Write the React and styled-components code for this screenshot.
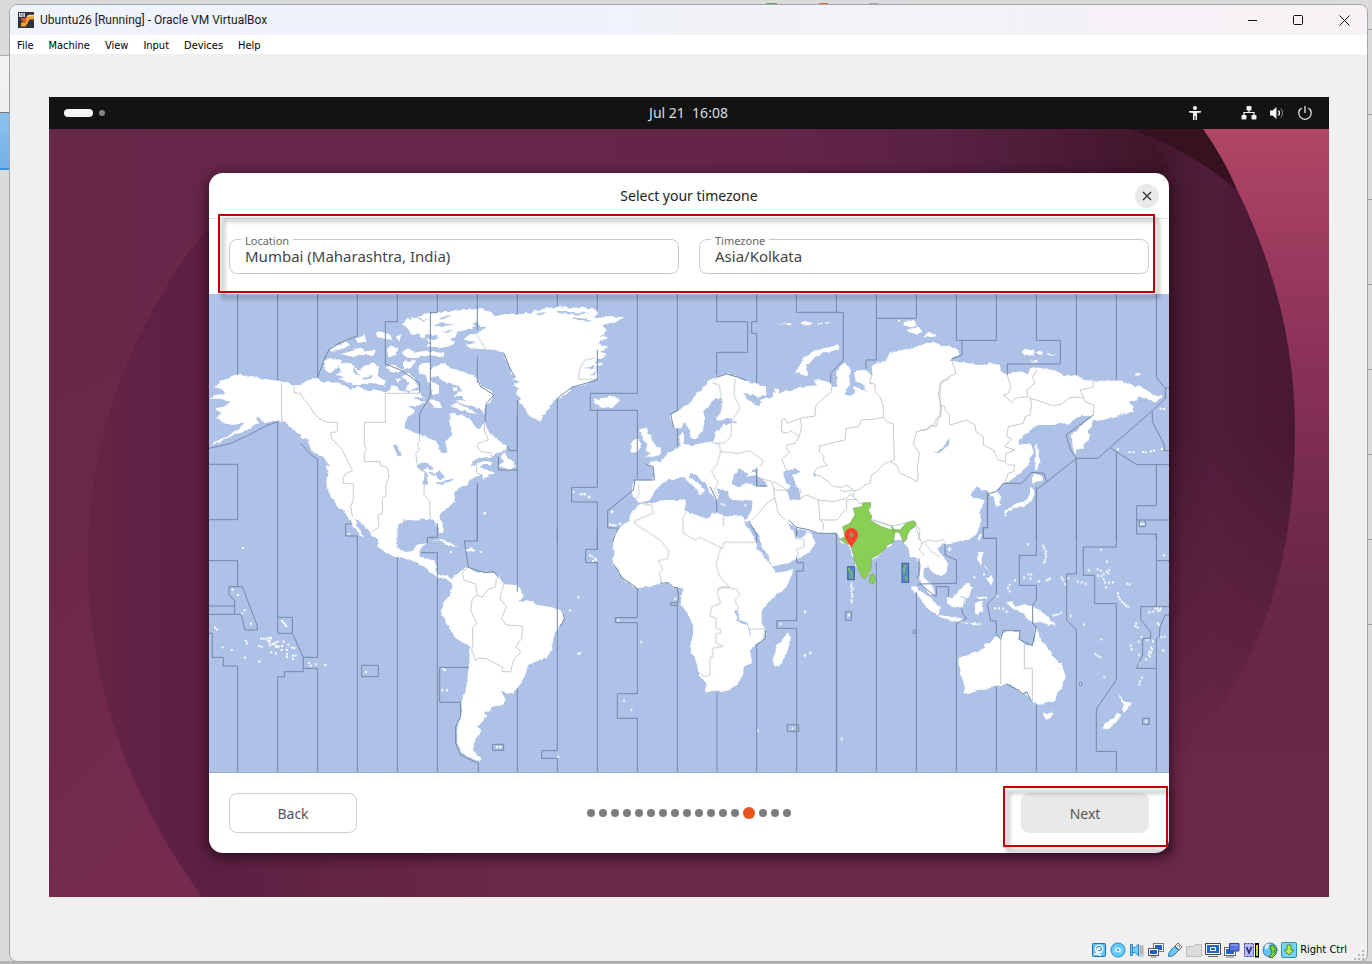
import React from "react"
import styled, { createGlobalStyle } from "styled-components"

const GlobalStyle = createGlobalStyle`
  * {
    box-sizing: border-box;
  }
  body {
    margin: 0;
    font-family: "DejaVu Sans Condensed", "DejaVu Sans", sans-serif;
    color: #000;
  }
  button, input {
    font: inherit;
    color: inherit;
  }
`

const titleFont = `Roboto, "Open Sans", sans-serif`
const guestFont = `"Noto Sans", "Open Sans", sans-serif`

/* ---------- host desktop and window ---------- */

const Desktop = styled.div`
  min-height: 100vh;
  padding: 4px 4px 2px 9px;
  display: flex;
  background:
    linear-gradient(#a9a9a9, #a9a9a9) 0 55px / 10px 1px no-repeat,
    linear-gradient(#f3f3f3, #efefef) 0 56px / 10px 56px no-repeat,
    linear-gradient(#777, #777) 0 112px / 10px 1px no-repeat,
    linear-gradient(#8cc2ee, #74b1e6) 0 113px / 10px 55px no-repeat,
    linear-gradient(#3c8ede, #3c8ede) 0 168px / 10px 2px no-repeat,
    linear-gradient(#5fa85a, #5fa85a) 766px 3px / 11px 2px no-repeat,
    linear-gradient(#d8654a, #d8654a) 819px 3px / 9px 2px no-repeat,
    linear-gradient(#aaa, #aaa) 869px 3px / 9px 2px no-repeat,
    repeating-linear-gradient(transparent 0 29px, #9b9b9b 29px 30px, transparent 30px 85px)
      right 0 / 5px 640px no-repeat,
    linear-gradient(#b4b4b4, #b4b4b4) 0 100% / 100% 3px no-repeat,
    #dbdbdb;
`
const Window = styled.div`
  flex: 1;
  display: flex;
  flex-direction: column;
  background: #f0f0f0;
  border: 1px solid #a3a7ab;
  border-radius: 8px;
  overflow: hidden;
`
const TitleBar = styled.header`
  height: 30px;
  padding-left: 8px;
  display: flex;
  align-items: center;
  gap: 6px;
  background: linear-gradient(90deg, #eef4fa 0%, #f0f3f9 45%, #f8f1f5 100%);
`
const WindowTitle = styled.h1`
  flex: 1;
  margin: 0;
  font: 400 12px ${titleFont};
  color: #1a1a1a;
`
const CaptionButtons = styled.div`
  display: flex;
`
const CaptionButton = styled.button`
  width: 46px;
  height: 28px;
  padding: 0;
  border: 0;
  background: none;
  display: grid;
  place-items: center;
`
const MenuBar = styled.nav`
  height: 19px;
  padding: 1px 0 0 7px;
  display: flex;
  align-items: center;
  gap: 15px;
  background: #fff;
  font-size: 11px;
`
const MenuLink = styled.a`
  color: #000;
  text-decoration: none;
`
const Viewport = styled.main`
  flex: 1;
  padding: 43px 38px 0 39px;
`
const StatusBar = styled.footer`
  height: 22px;
  padding: 0 2px;
  display: flex;
  align-items: center;
  justify-content: flex-end;
  gap: 3px;
  font-size: 11px;
  line-height: 16px;
`
const StatusIcon = styled.svg`
  width: 16px;
  height: 16px;
  display: block;
`
const Grip = styled.svg`
  width: 12px;
  height: 12px;
  margin-left: 3px;
  align-self: flex-end;
`

/* ---------- guest screen ---------- */

const Guest = styled.section`
  font-family: ${guestFont};
`
const TopBar = styled.div`
  height: 32px;
  padding: 0 16px 0 15px;
  display: grid;
  grid-template-columns: 1fr auto 1fr;
  align-items: center;
  background: #131313;
  color: #dedede;
  font-size: 14px;
  line-height: 20px;
`
const Workspaces = styled.div`
  display: flex;
  align-items: center;
  gap: 6px;
`
const Workspace = styled.span`
  width: ${p => (p.$current ? 29 : 6)}px;
  height: ${p => (p.$current ? 8 : 6)}px;
  border-radius: 4px;
  background: ${p => (p.$current ? "#f4f4f4" : "#858585")};
`
const Clock = styled.time`
  white-space: pre;
`
const Tray = styled.div`
  display: flex;
  justify-content: flex-end;
  gap: 12px;
`
const TrayIcon = styled.svg`
  width: 16px;
  height: 16px;
  display: block;

  &:first-child {
    margin-right: 26px;
  }
`
const Stage = styled.div`
  position: relative;
  padding: 44px 0;
  background: #6a2747;
`
const WallpaperArt = styled.svg`
  position: absolute;
  inset: 0;
  width: 100%;
  height: 100%;
`
const Dialog = styled.section`
  position: relative;
  width: 75%;
  margin: 0 auto;
  background: #fff;
  border-radius: 14px;
  box-shadow: 0 3px 12px 2px rgba(20, 0, 15, 0.6);
  color: #444;
`
const DialogHeader = styled.header`
  height: 46px;
  padding: 0 10px;
  display: grid;
  grid-template-columns: 24px 1fr 24px;
  align-items: center;
  border-bottom: 1px solid #e2e2e2;
`
const DialogTitle = styled.h2`
  grid-column: 2;
  margin: 0;
  text-align: center;
  font-size: 14px;
  font-weight: 400;
  color: #222;
`
const CloseButton = styled.button`
  width: 24px;
  height: 24px;
  padding: 0;
  border: 0;
  border-radius: 50%;
  background: #e9e9e9;
  display: grid;
  place-items: center;
`
const Fields = styled.form`
  position: relative;
  padding: 20px;
  display: flex;
  gap: 20px;
`
const Field = styled.div`
  position: relative;
  flex: 1;
`
const FieldLabel = styled.label`
  position: absolute;
  top: -5px;
  left: 12px;
  padding: 0 4px;
  background: #fff;
  font-size: 11px;
  line-height: 14px;
  color: #666;
`
const FieldInput = styled.input`
  width: 100%;
  height: 35px;
  padding: 0 15px 1px;
  display: block;
  border: 1px solid #c9c9c9;
  border-radius: 8px;
  background: #fff;
  font-size: 15px;
`
const Highlight = styled.span`
  position: absolute;
  inset: ${p => p.$inset};
  border: 2px solid #c00000;
  filter: drop-shadow(4px 5px 2px rgba(0, 0, 0, 0.4));
  pointer-events: none;
`
const MapArt = styled.svg`
  width: 100%;
  height: auto;
  display: block;
`
const DialogFooter = styled.footer`
  padding: 20px;
  display: grid;
  grid-template-columns: 128px 1fr 128px;
  align-items: center;
`
const ButtonSlot = styled.div`
  position: relative;
  display: flex;
`
const WizardButton = styled.button`
  flex: 1;
  height: 40px;
  border: 1px solid ${p => (p.$filled ? "#e9e9e9" : "#cdcdcd")};
  border-radius: 8px;
  background: ${p => (p.$filled ? "#e9e9e9" : "#fff")};
  color: #555;
  font-size: 14px;
`
const Steps = styled.div`
  display: flex;
  align-items: center;
  justify-content: center;
  gap: 4px;
`
const Step = styled.span`
  width: ${p => (p.$current ? 12 : 8)}px;
  height: ${p => (p.$current ? 12 : 8)}px;
  border-radius: 50%;
  background: ${p => (p.$current ? "#e95420" : "#7d7d7d")};
`

/* ---------- world map data ----------
   Every region has its own origin on the map and uses units of a third of a pixel. */

const regions = [
  {
    id: "americas",
    x: 209,
    y: 290,
    land: [
      "15,292 45,270 60,262 70,257 92,252 105,258 130,262 160,266 190,270 216,274 250,285 270,286 285,276 300,270 325,264 345,278 360,276 380,280 400,284 425,296 450,290 480,302 500,300 520,304 545,302 550,285 575,303 600,305 632,300 640,318 650,322 625,325 612,322 640,335 650,340 625,347 597,348 620,362 615,372 600,380 588,395 588,412 600,420 620,430 650,440 680,452 688,470 700,488 710,490 714,475 708,455 730,435 728,415 722,400 725,385 720,372 735,368 765,380 785,388 792,400 800,412 812,418 825,395 830,410 845,430 860,445 880,460 895,468 890,480 870,490 850,500 820,503 795,512 780,532 800,522 820,514 850,512 845,525 820,525 812,530 825,538 850,545 862,548 835,558 822,566 820,553 800,560 780,572 775,585 755,590 745,603 735,608 738,620 735,635 720,650 705,660 693,672 693,690 700,705 705,722 695,728 685,712 678,692 665,688 640,686 625,692 600,690 580,692 568,705 565,730 565,765 572,778 590,786 612,782 622,765 650,760 640,778 628,790 635,805 660,806 678,812 680,835 683,850 695,860 715,855 730,865 742,852 760,842 775,832 785,835 800,842 830,848 855,845 870,865 885,882 905,884 925,885 935,900 943,920 930,935 950,930 965,934 985,945 1030,952 1045,960 1062,970 1066,985 1055,1010 1035,1030 1030,1070 1022,1088 1012,1105 985,1112 960,1125 955,1145 940,1170 925,1195 910,1210 890,1210 878,1200 880,1215 890,1228 882,1245 850,1250 848,1265 825,1265 832,1280 820,1295 805,1310 818,1325 805,1345 795,1360 792,1380 805,1395 820,1405 808,1416 775,1400 758,1385 745,1360 745,1320 748,1295 755,1280 760,1260 755,1240 768,1210 775,1170 780,1120 785,1070 765,1060 740,1045 725,1020 710,990 697,968 705,935 722,915 730,895 722,875 710,865 690,868 670,850 655,838 640,825 610,812 590,805 560,802 530,788 505,768 508,752 488,735 475,715 455,700 437,690 430,675 440,700 455,722 466,745 452,735 446,722 430,705 420,690 410,665 385,650 370,625 355,600 352,575 355,545 350,525 365,530 340,500 318,488 305,480 295,458 300,450 275,440 255,420 235,402 220,395 190,393 165,397 150,382 140,390 152,397 135,405 115,420 95,428 60,442 30,458 5,466 20,456 60,436 90,418 105,400 70,405 45,400 25,385 34,368 20,355 45,350 62,335 35,326 5,326 15,316 50,310 35,296",
      "390,225 405,219 420,218 450,240 470,225 490,220 510,230 505,260 530,270 525,290 500,280 460,285 430,284 415,275 392,268 410,262 380,255 395,240",
      "345,210 362,204 380,206 400,215 385,235 360,250 345,240 350,225 340,215",
      "362,182 372,170 410,155 425,165 405,172 390,180",
      "395,192 440,182 430,176 455,170 470,185 500,178 495,195 460,195 430,200",
      "440,145 470,136 465,142 470,155 445,158",
      "500,128 520,126 545,135 550,150 520,145 500,133",
      "535,175 550,168 565,174 560,195 540,200",
      "560,140 578,130 572,155",
      "530,232 545,224 560,225 580,240 565,250 545,245",
      "585,215 620,210 612,225 600,240 585,235",
      "580,255 600,252 615,265 630,290 610,303 590,298 598,280",
      "560,262 575,266 566,280",
      "590,180 600,172 612,188 650,182 705,185 705,200 660,196 620,205 590,202 580,190",
      "580,100 595,85 612,90 606,82 640,78 660,70 690,65 720,66 750,58 800,55 830,60 850,68 856,80 835,85 820,97 790,100 800,108 770,120 745,125 740,140 725,150 740,155 715,170 690,175 648,172 668,160 650,150 690,145 680,135 650,132 645,150 630,130 610,135 600,120",
      "628,235 640,220 660,218 660,245 680,228 700,218 720,226 725,238 750,240 770,250 790,255 810,270 815,290 835,298 855,312 848,330 830,345 828,372 812,355 770,345 740,335 770,330 755,318 735,318 760,300 740,285 710,280 690,260 668,258 665,275 690,285 690,310 670,315 665,290 650,255 632,250",
      "665,328 690,335 700,352 680,350 660,340",
      "725,350 745,340 785,358 805,372 788,370 755,360",
      "728,293 745,292 745,306 730,302",
      "875,500 885,488 895,500 912,512 918,530 905,538 870,530 882,512",
      "670,752 700,747 725,757 745,770 720,768 700,755",
      "765,780 785,775 802,782 780,788",
      "688,716 702,722 700,728 690,726"
    ],
    water: [
      "622,530 635,518 650,518 670,530 673,540 655,535 640,540",
      "648,547 656,552 653,585 643,582",
      "660,545 680,548 690,540 708,562 692,568 678,552 668,556",
      "678,580 700,585 712,575 690,574",
      "705,572 738,563 730,573 712,578",
      "552,465 562,460 575,495 568,500 558,480",
      "785,522 800,508 850,500 868,505 855,532 848,535 850,512 815,515",
      "612,78 640,88 665,86 640,92", "660,108 700,100 740,104 700,108", "700,125 735,118 715,128", "690,82 730,78 700,88",
      "430,225 440,240 452,258 446,258 434,245", "460,262 490,255 486,262 466,268"
    ],
    sea: [
      "86,12 86,255", "206,12 206,270", "326,262 345,210 360,178 390,160 445,137 445,12",
      "326,12 326,262", "565,12 565,95 529,95 529,222 575,240 632,280 632,310",
      "685,12 685,68 664,68 664,318 632,370 632,430", "805,12 805,120", "925,12 925,72",
      "805,580 805,753 766,753 778,832 800,840 830,848 855,845 870,865", "925,380 925,905", "925,1195 925,1448",
      "0,475 60,462 120,435 170,408 206,395 206,982", "0,523 86,523 86,689 0,689",
      "275,460 305,493 326,508 326,1102", "868,500 868,540 925,540", "895,468 900,482 925,482",
      "805,268 815,290 855,315 832,340 828,395", "430,702 410,702 410,738 445,738 445,1448",
      "565,800 565,1448", "685,700 685,742 655,742 655,760", "635,788 685,788 685,1448",
      "1045,720 1045,1382 998,1382 998,1405 1045,1405 1045,1448",
      "1165,720 1165,778 1130,778 1130,818 1165,818 1165,1448",
      "206,982 250,982 250,1030 206,1030 206,982", "250,1030 283,1102 326,1102", "283,1102 283,1135 326,1135 326,1448",
      "283,1135 283,1145 227,1145 227,1160 206,1160 206,1448", "0,812 86,812 86,890",
      "60,890 100,890 145,1008 145,1020 108,1020 97,973 0,973", "60,890 60,915 77,930 77,973", "0,948 77,948",
      "0,1030 10,1030 10,1102 43,1102 43,1128 86,1128 86,1448", "458,1126 508,1126 508,1160 458,1160 458,1126",
      "780,1132 692,1132 692,1237 755,1237 755,1280 740,1310 740,1360 755,1395 808,1420 808,1448",
      "851,1363 884,1363 884,1381 851,1381 851,1363", "1055,1010 1066,985 1062,970"
    ],
    border: [
      "218,274 218,392 235,400", "255,285 255,308 275,310 282,325 300,345 315,370 330,385 355,397 385,397 385,425 365,428 368,445 400,480 412,505 430,542 412,550 402,565 402,580 433,582 433,630 425,650 430,680",
      "632,310 529,310 529,397 466,397 466,465 472,475 466,490 466,515 513,515 515,527 535,532 540,560 530,590 532,615 520,625 520,670 507,675 510,710 490,725",
      "632,430 632,455 625,462 632,480 620,490 625,525 632,540 648,545 645,600 645,615 662,632 664,688", "828,395 825,420 838,450 808,460 805,470 815,485 845,488 852,510",
      "803,530 803,550 822,556", "775,832 760,850 765,870 800,882 805,915 790,925 785,960 803,1000 790,1015 792,1060 788,1080",
      "805,915 820,922 835,900 860,890 862,865", "885,882 872,925 892,950 878,985 892,1005 940,1008 938,1045 920,1070 935,1085 912,1115 905,1145 880,1145 882,1132 850,1115 830,1105 808,1105 800,1112 788,1080"
    ],
    dots: [
      [827, 670], [102, 774], [71, 899], [87, 915], [107, 961], [99, 971], [126, 1001], [18, 1013], [24, 1019], [41, 1072], [68, 1080], [108, 1103], [151, 1115], [110, 1052], [114, 1060], [151, 1068], [158, 1070], [156, 1046], [164, 1046],
      [172, 1046], [179, 1043], [186, 1044], [176, 1052], [183, 1051], [181, 1058], [190, 1062], [196, 1064], [204, 1068], [199, 1058], [206, 1055], [183, 1066], [202, 1071], [209, 1070], [219, 1068], [224, 1055], [218, 1080], [238, 1064], [187, 1087], [201, 1090],
      [234, 1080], [249, 1073], [256, 1074], [234, 1093], [234, 1101], [252, 1097], [260, 1097], [252, 1107], [219, 993], [224, 999], [228, 1003], [232, 1008], [300, 1119], [305, 1127], [320, 1123], [349, 1125], [471, 1146], [703, 1136], [708, 1140], [700, 1201],
      [714, 1201], [419, 732], [1143, 796], [1150, 800], [1158, 806], [1152, 813], [1161, 810], [1108, 922], [1083, 961], [1108, 1091], [1113, 1090], [726, 786], [815, 786], [864, 1371], [874, 1371], [1048, 1400]
    ]
  },
  {
    id: "atlantic",
    x: 460,
    y: 290,
    land: [
      "55,85 85,75 110,78 135,72 170,75 200,68 210,72 225,62 260,55 290,50 320,48 330,54 370,50 400,58 415,70 400,80 412,85 450,78 490,82 470,95 425,105 440,120 420,140 445,140 415,160 445,170 420,185 440,195 430,205 400,215 430,222 405,235 415,262 375,285 335,292 325,308 315,315 290,325 270,345 268,358 250,375 240,395 225,385 215,383 195,355 180,340 182,325 165,310 178,298 160,285 180,275 155,270 172,262 150,250 148,230 130,190 110,180 75,178 30,175 15,165 50,158 10,148 30,133 60,125 80,112 60,108",
      "400,322 415,330 430,325 465,318 480,330 460,350 425,354 415,345 405,338",
      "540,420 555,412 565,418 562,432 575,435 572,448 580,455 590,472 603,478 600,494 580,500 552,500 572,490 556,482 565,465 552,450 548,438",
      "512,460 530,448 545,455 540,475 530,483 512,488",
      "632,375 655,362 690,335 720,300 745,275 770,262 800,252 835,262 850,272 890,280 918,292 918,312 890,318 840,302 838,320 835,350 815,385 770,392 760,370 765,350 785,340 785,325 765,328 745,348 728,365 735,395 725,425 705,447 692,440 685,415 675,400 665,415 645,415 635,400",
      "835,295 850,310 870,338 895,348 905,335 935,325 940,305 960,315 960,590 940,580 930,572 905,560 888,545 890,560 870,580 830,600 800,590 800,600 765,595 778,615 770,635 755,615 745,590 720,565 690,545 690,560 715,582 735,600 727,615 715,600 690,580 668,560 650,565 625,570 610,580 590,600 578,610 570,630 540,640 522,625 518,600 522,580 530,570 575,572 583,560 580,530 555,522 580,515 605,512 625,488 650,475 662,462 655,440 672,426 672,463 700,465 740,456 762,460 762,440 775,425 775,402 820,400 815,385",
      "805,602 850,595 900,590 940,582 960,600 960,655 920,650 885,665 880,630 850,632 820,630",
      "708,610 725,606 722,616"
    ],
    water: [
      "745,390 758,388 755,400", "770,395 830,392 826,400 790,402 780,422 768,420",
      "225,72 255,66 245,74", "290,62 330,66 395,70 340,74 300,70", "330,82 380,86 400,92 350,90", "370,235 405,228 400,236", "385,255 408,248 404,256"
    ],
    sea: [
      "52,200 52,278", "52,580 52,750", "172,330 172,480", "292,12 292,50", "292,325 292,750",
      "412,12 412,60", "412,180 412,270 335,292 292,325", "532,12 532,310 391,310 391,361 532,361 532,565", "412,361 412,592 335,592 335,636 412,636 412,780",
      "652,12 652,362 632,372 640,410", "652,415 652,468", "770,12 770,95 863,95 863,187 770,187 770,255", "890,12 890,95 875,95 875,130 890,130 890,280",
      "890,540 890,590", "555,522 580,530 583,570 525,570 520,600 443,662 443,714 475,714", "750,590 770,630 770,665",
      "132,190 150,235 165,262", "770,262 800,252 835,262 860,272"
    ],
    border: [
      "48,130 77,178", "355,268 360,235 375,210 405,204", "355,268 412,268", "535,582 538,610 530,628",
      "757,278 778,285 785,330", "825,268 822,315 840,355 818,388", "780,485 835,490 870,482 910,512 900,530",
      "762,460 778,462 782,485 772,520 755,545 775,580 760,600 778,625", "815,400 812,440 795,458 762,460"
    ],
    dots: [[341, 606], [364, 612], [373, 612], [387, 622], [456, 665], [450, 703], [460, 706], [480, 702], [74, 670], [785, 642], [793, 646], [856, 646]]
  },
  {
    id: "russia",
    x: 700,
    y: 290,
    land: [
      "110,265 150,275 195,298 200,312 175,320 130,308 150,335 165,348 190,347 182,330 200,322 220,322 228,310 222,292 240,300 235,312 262,298 272,305 300,290 355,285 340,272 360,270 385,275 398,290 412,290 408,250 425,222 445,225 452,240 448,280 435,312 450,318 465,305 462,288 490,300 500,302 490,285 465,272 460,250 480,240 500,240 518,262 515,225 560,212 570,190 600,180 640,175 680,158 715,160 725,170 750,175 750,750 430,750 410,735 365,730 325,724 290,715 270,700 255,690 265,720 290,750 185,750 165,720 150,700 145,680 155,660 158,632 130,625 100,632 85,615 85,600 60,595 50,560 40,460 45,430 60,410 55,402 100,398 95,385",
      "285,245 300,225 310,205 330,190 370,175 415,166 418,178 375,187 345,203 322,222 318,240 325,262 300,250",
      "235,103 275,99 272,106", "310,92 340,99 325,106 300,100", "350,98 370,102 355,106", "375,97 392,97 380,102",
      "605,105 615,92 640,92 650,105 635,112", "620,120 655,110 668,125 650,133 625,125", "670,142 685,125 712,138 690,142"
    ],
    water: [
      "250,545 275,535 305,545 275,555 285,575 298,598 302,630 268,628 262,600 272,588 252,570",
      "95,582 100,560 120,537 145,552 140,560 165,555 200,575 203,590 175,590 140,578 115,592",
      "150,548 172,532 178,540 168,550", "702,488 725,475 748,445 748,460 725,480", "338,548 350,556 346,562",
      "50,345 70,332 60,370 40,400 35,365"
    ],
    sea: ["289,12 289,67 430,67 430,210 392,250 392,278", "409,12 409,67", "529,12 529,210 498,210 498,235", "529,85 649,85 649,12", "289,718 290,740", "170,545 170,588 200,588"],
    border: [
      "395,290 395,305 370,325 348,345 345,378 300,385 262,400 255,385 245,390 245,425 262,430 272,422 298,440 285,460 260,465 260,478 270,485 245,508 255,530 262,545",
      "298,440 305,410 300,385", "505,240 515,255 510,280 525,282 525,305 540,320 550,350 550,382 520,388 485,390 475,410 438,415 435,450 400,458 358,468 358,485 372,500 370,512 382,525 350,535 342,548",
      "550,382 560,395 580,402 583,510 555,520 530,545 515,555 510,580 495,585 475,600 462,602 460,620", "345,555 360,558 385,575 400,590 425,592 440,585 460,600 430,605 420,600",
      "572,516 590,525 600,550 625,560 650,575 655,555 652,535 658,490 640,462 650,425 680,418 700,408 710,385 722,380 725,348 720,340 720,280 750,265",
      "175,562 205,572 230,580 262,600 225,600 215,580", "155,690 180,665 205,635 225,625 220,595", "225,625 235,670 255,690",
      "300,625 320,615 355,630 360,690 370,700 370,720", "355,630 400,635 440,625 450,612 470,628 440,630 440,655 410,690 360,690",
      "470,628 478,640 510,640", "515,690 550,700 575,708 605,702 640,692", "640,690 660,720 655,750"
    ],
    dots: [[597, 92]]
  },
  {
    id: "eastAsia",
    x: 920,
    y: 290,
    land: [
      "0,175 20,160 40,158 60,168 90,168 115,180 118,195 90,205 50,228 95,212 130,218 150,220 200,228 205,218 240,225 242,240 262,255 280,245 325,250 330,235 345,232 400,240 430,255 480,258 490,270 520,272 580,272 605,272 630,285 660,290 680,300 700,315 725,320 705,340 685,328 655,320 650,332 622,335 640,350 642,365 610,370 590,378 550,390 520,393 505,420 512,435 498,460 485,475 470,480 465,495 458,470 455,435 480,410 515,380 490,375 460,390 445,405 430,400 400,405 350,405 320,430 292,455 305,465 330,460 340,480 330,510 320,530 300,548 270,572 255,578 230,600 240,620 243,645 228,650 222,625 205,610 200,600 185,598 150,612 162,622 188,628 165,638 168,655 180,675 183,695 165,735 150,750 0,750",
      "345,465 350,460 354,485 360,510 352,540 345,540 348,500", "335,575 345,550 370,565 372,570 350,575 340,582",
      "330,590 344,600 338,630 310,652 285,650 268,662 258,658 290,640 322,628 330,610", "250,660 264,660 258,678", "272,658 280,655 278,662",
      "305,185 315,177 330,180 345,182 340,195 315,198", "348,188 357,182 367,188 362,196", "380,188 412,195 385,195", "330,214 345,210 357,218",
      "640,255 650,247 668,252 655,257"
    ],
    water: ["42,488 65,475 88,445 85,465 60,488", "150,610 175,592 188,602 170,618"],
    sea: [
      "109,12 109,151 229,151 229,12", "126,151 126,195 95,207", "349,12 349,151 421,151 421,222 262,222 262,255", "469,12 469,255", "589,12 589,268",
      "709,12 709,262 736,295 736,325 697,362 533,505 469,505 452,480 438,435 520,375", "697,365 697,395 733,465 733,482 747,482", "747,292 736,295",
      "469,505 349,600 349,750", "469,505 469,750", "570,473 650,524 747,524", "589,487 589,750", "709,524 709,647 650,647 650,732 709,732 709,750",
      "650,690 747,690", "658,690 658,710 676,710 676,690", "380,577 372,550 335,547 305,580 250,580 230,605 208,610 203,620 203,713 190,713 190,745 229,745"
    ],
    border: [
      "95,210 108,250 85,262 65,275 55,310 62,345 75,350 75,360 88,375 90,405 140,390 165,405 168,425 190,440 190,465 220,480 235,510 255,515 265,525 285,525 280,545 265,550 255,578",
      "0,420 20,420 30,405 48,410 60,370 62,345", "262,255 272,290 265,310 250,315 262,325 275,338 285,325 325,320 320,300 345,280 338,262 350,240",
      "330,320 335,345 330,375 315,380 310,400 265,410 260,440 275,445 255,470 285,480 258,490 255,515",
      "330,325 355,332 400,348 425,342 450,322 490,322 480,300 520,292 520,272", "490,322 495,335 522,345 520,375"
    ],
    dots: [[594, 478], [629, 486], [641, 487], [669, 486], [677, 487], [693, 484], [702, 482], [726, 477], [722, 356], [732, 357], [662, 702], [671, 702]]
  },
  {
    id: "africa",
    x: 580,
    y: 490,
    land: [
      "98,158 105,135 115,115 145,92 155,65 180,42 215,40 260,30 290,30 315,28 318,40 312,60 330,68 350,75 375,85 390,85 395,68 410,68 430,76 490,80 500,105 515,130 530,160 530,180 545,190 565,215 580,235 583,248 610,245 640,237 635,260 610,300 580,322 560,345 545,365 545,400 557,420 555,445 530,460 508,485 515,500 515,520 490,535 490,552 475,580 445,602 400,602 380,608 375,580 358,555 345,505 327,470 340,430 338,400 320,365 305,350 302,335 308,300 295,290 280,293 265,278 240,280 210,290 170,295 140,275 125,262 110,235 97,225 102,195",
      "625,428 632,450 620,490 600,530 582,528 578,510 588,480 585,465 605,455",
      "490,85 500,95 512,95 540,130 545,170 565,195 575,230 620,220 665,200 690,185 707,155 695,135 680,122 680,135 660,145 645,140 640,120 620,95 625,90 650,112 690,120 715,130 770,130 785,135 785,35 650,50 525,50 515,75 500,90"
    ],
    water: ["462,360 470,358 478,388 500,400 505,408 475,395", "504,415 510,420 512,442 505,430"],
    sea: [
      "172,295 172,383 106,383 106,398 172,398 172,611 112,611 112,685 172,685 172,848", "240,280 265,278 280,292 292,293 296,325 292,340 292,848", "292,338 272,338 272,346 292,346", "411,608 411,848",
      "557,420 555,445 530,465 530,848", "650,112 650,138", "650,200 650,218 670,218 670,243 650,243 650,392 590,392 590,415 650,415 650,848", "622,704 656,704 656,724 622,724 622,704",
      "625,90 650,112 690,120 715,130 770,130 770,848", "510,100 530,135 530,158", "98,220 110,235 125,262 172,295", "115,115 105,135 97,158"
    ],
    border: [
      "190,45 215,45 220,70 165,92 165,102 240,150 265,180 265,205 235,212 248,238 238,250 245,280", "320,65 308,85 310,130 345,150 360,142 422,173 430,173 430,157 528,157",
      "422,173 408,225 420,260 448,290 415,295 412,310 422,340 395,350 390,378 408,385 408,415 422,418 422,430 408,430 408,458 430,468 398,475 398,500 390,502 390,555 372,560 365,552",
      "415,295 430,290 470,298 480,315 465,330 470,345 475,350 472,370", "505,408 508,418 553,416 553,440", "430,78 430,110", "645,145 672,148 672,170 650,178 655,200"
    ],
    dots: [[29, 20], [3, 13], [14, 13], [96, 66], [90, 104], [98, 106], [107, 107], [120, 101], [285, 327], [115, 391], [184, 456], [132, 632], [154, 660], [534, 722], [638, 715], [602, 402], [675, 365], [675, 496], [691, 489]]
  },
  {
    id: "oceania",
    x: 800,
    y: 480,
    land: [
      "100,60 555,60 540,92 543,120 530,148 500,175 470,185 440,195 428,190 412,208 430,230 443,250 440,278 420,290 405,280 385,262 372,265 370,290 385,305 400,325 405,345 392,345 375,325 358,295 362,260 352,235 340,230 330,235 325,205 305,178 285,175 280,190 255,205 235,230 212,240 210,275 195,297 180,285 165,245 150,200 130,192 115,165 105,160",
      "332,318 350,320 375,342 395,355 420,385 415,405 395,395 370,370 350,345", "418,405 440,408 460,412 485,415 488,428 450,420 420,412",
      "443,350 455,352 470,345 495,315 505,308 517,322 508,345 495,365 490,385 455,380 445,368", "525,370 535,365 552,362 545,378 548,400 540,392 535,405 525,400", "528,352 568,350 560,356 535,357",
      "533,215 547,216 548,240 542,258 532,240", "560,295 572,285 580,300 575,312 562,302", "532,175 542,160 545,165 537,183", "440,206 452,202 455,206 447,216",
      "618,367 640,364 645,380 675,373 700,380 730,400 745,405 750,425 772,438 745,435 720,425 705,428 685,420 670,400 650,392 625,378", "755,405 780,400 788,392 784,404 760,408",
      "478,540 485,530 520,520 550,508 555,490 570,490 580,475 605,470 615,455 630,450 660,456 657,475 670,490 697,497 703,475 708,445 720,465 725,485 738,495 748,515 770,540 790,560 797,590 785,625 770,645 765,665 740,670 720,675 695,665 685,650 675,648 680,635 668,642 658,632 640,618 620,613 580,618 555,632 530,632 510,642 490,640 495,625 480,570",
      "728,697 742,701 757,697 750,715 738,720", "955,643 965,652 975,665 995,668 985,690 970,700 962,688 972,675", "903,745 915,730 935,720 952,698 962,705 950,725 935,738 925,750",
      "582,425 560,440 575,430", "490,428 510,428 500,432", "508,428 550,432 520,436", "550,250 562,265 572,280 556,262"
    ],
    water: [],
    sea: [
      "105,160 109,165 109,878", "229,245 229,878", "357,235 357,285 349,295", "349,335 349,878", "358,310 405,348 409,348 409,320 445,320 445,352", "435,192 435,225 469,240 469,310 358,312 352,318",
      "485,380 488,402 500,415 469,430 469,878", "562,35 562,143 550,143 550,175 589,175 589,345 562,373 572,423 589,423 589,462 602,478 610,452 660,452 657,478 697,497 709,440 698,432", "589,618 589,878", "709,20 709,226 658,226 658,316 709,316 709,360 698,375 698,432", "709,675 709,878",
      "829,0 829,282 800,282 800,420 829,450 829,878", "949,0 949,201 850,201 850,286 884,286 884,371 949,371 949,600 889,687 889,814 949,814 949,878",
      "1069,160 1069,380", "1069,242 1107,242", "1107,380 1022,380 1022,418 1052,455 1052,475 1028,475 1028,525 1009,565 1069,565", "1107,405 1095,405 1080,440 1078,470 1069,475 1069,878",
      "1028,715 1048,715 1048,733 1028,733 1028,715", "136,395 154,395 154,421 136,421 136,395", "340,450 349,450 349,460 340,460 340,450", "838,608 845,608 845,616 838,616 838,608",
      "620,613 658,632 668,642 680,635 695,665"
    ],
    border: ["602,475 602,613", "673,492 673,565 697,565 697,665", "215,118 250,130 275,138 275,148", "348,138 352,155 365,190 358,210 375,228", "365,190 385,180 410,185 428,178 440,195", "375,190 395,215 420,230", "480,350 495,352 490,375"],
    dots: [
      [155, 312], [153, 320], [158, 326], [154, 333], [156, 342], [157, 350], [154, 360], [156, 366], [15, 395], [15, 526], [31, 519], [147, 405], [684, 193], [730, 198], [733, 206], [738, 214], [737, 222], [738, 230], [736, 240], [733, 247], [645, 301], [672, 293], [686, 283], [694, 284], [692, 296], [717, 304],
      [740, 301], [745, 299], [750, 296], [785, 293], [790, 300], [795, 312], [805, 295], [833, 305], [845, 307], [857, 311], [629, 315], [624, 325], [629, 334], [592, 348], [866, 271], [893, 268], [894, 287], [903, 272], [904, 288], [911, 282], [920, 275], [928, 270], [925, 280], [903, 209], [921, 245], [911, 297], [915, 308], [918, 322], [927, 308], [939, 307],
      [981, 311], [989, 313], [954, 340], [956, 350], [960, 358], [966, 365], [972, 371], [978, 377], [985, 380], [1048, 397], [1060, 395], [1066, 385], [1073, 384], [1080, 390], [1074, 392], [1083, 384], [1092, 226], [1073, 430], [1078, 435], [1009, 430], [1006, 438], [1013, 442], [1025, 471], [1016, 485],
      [1042, 480], [1059, 484], [1084, 471], [1094, 470], [992, 497], [995, 508], [1017, 525], [1054, 503], [1056, 508], [1048, 515], [1053, 518], [1046, 524], [1050, 530], [1038, 538], [1090, 511], [1018, 549], [1026, 593], [1020, 604], [1018, 613], [913, 591], [1038, 725], [904, 478], [886, 522],
      [893, 527], [901, 532], [812, 408], [852, 434], [585, 385], [597, 385], [609, 386], [125, 777], [523, 292], [552, 283], [840, 612], [620, 395]
    ]
  }
]

const india = [
  "160,85 185,80 190,68 212,68 212,82 204,90 215,108 212,122 245,140 275,150 285,155 280,188 262,195 250,212 235,225 215,235 212,270 195,297 184,290 175,268 165,245 153,195 135,190 120,178 135,170 132,158 128,140 150,130 165,105",
  "275,138 282,148 300,150 318,130 338,123 348,128 345,140 330,150 322,165 320,178 310,188 304,170 298,157 280,156",
  "210,285 220,282 227,300 218,313 208,308"
]

// one pass over all regions, so that a later region's land never hides an earlier line
const Layer = ({ render, ...rest }) => (
  <g strokeLinejoin="round" {...rest}>
    {regions.map(r => (
      <g key={r.id} transform={`translate(${r.x} ${r.y}) scale(0.33333)`}>
        {render(r)}
      </g>
    ))}
  </g>
)

const shapes = list => list.map(points => <polygon key={points} points={points} />)
const lines = list => list.map(points => <polyline key={points} points={points} />)

const WorldMap = () => (
  <MapArt viewBox="209 294 960 479" role="img" aria-label="World map of time zones">
    <defs>
      <filter id="coast" filterUnits="userSpaceOnUse" x="209" y="294" width="960" height="479">
        <feTurbulence type="fractalNoise" baseFrequency="0.16" numOctaves="2" seed="4" />
        <feDisplacementMap in="SourceGraphic" scale="4" xChannelSelector="R" yChannelSelector="G" />
      </filter>
    </defs>
    <rect x="209" y="294" width="960" height="479" fill="#adc2e6" />
    <g filter="url(#coast)">
      <Layer fill="#fff" render={r => shapes(r.land)} />
      <Layer fill="#adc2e6" render={r => shapes(r.water)} />
    </g>
    <Layer fill="none" stroke="#b4bfc2" strokeWidth="2.400" render={r => lines(r.border)} />
    <Layer
      fill="#fff"
      render={r => r.dots.map(([x, y]) => <rect key={`${x}-${y}`} x={x - 3} y={y - 3} width="6" height="6" />)}
    />
    <Layer fill="none" stroke="#7089a6" strokeWidth="3" render={r => lines(r.sea)} />
    <g transform="translate(800 480) scale(0.33333)">
      <g fill="#8acf55" stroke="#78a35c" strokeWidth="2">
        {shapes(india)}
      </g>
      <g fill="#5988cc" stroke="#3f628f" strokeWidth="3">
        <rect x="143" y="260" width="20" height="39" />
        <rect x="306" y="250" width="20" height="57" />
      </g>
      <g fill="none" stroke="#7fc05c" strokeWidth="5">
        <path d="M146 264l4 12 6 4-3 10 5 6M317 255l-5 10 1 16M316 289l5 12" />
      </g>
      <path d="M154 204C147 186 134 180 134 164a20 20 0 0 1 40 0c0 16-13 22-20 40z" fill="#f9402f" />
      <circle cx="154" cy="165" r="7" fill="#8f9a52" />
    </g>
    <path d="M209 772.500h960" stroke="#9aaecb" />
  </MapArt>
)

const Wallpaper = () => (
  <WallpaperArt viewBox="49 129 1280 768" preserveAspectRatio="none" aria-hidden="true">
    <defs>
      <linearGradient id="pink" x1="0" y1="0" x2="0" y2="1">
        <stop offset="0" stopColor="#b04664" />
        <stop offset="0.3" stopColor="#8a3159" />
        <stop offset="0.62" stopColor="#67264a" />
        <stop offset="1" stopColor="#6a2747" />
      </linearGradient>
      <linearGradient id="disc" x1="0" y1="0" x2="1" y2="0">
        <stop offset="0" stopColor="#642446" />
        <stop offset="0.1" stopColor="#5c2042" />
        <stop offset="0.5" stopColor="#5f2245" />
        <stop offset="0.75" stopColor="#5a2142" />
        <stop offset="0.88" stopColor="#42172b" />
        <stop offset="0.93" stopColor="#501d3b" />
        <stop offset="1" stopColor="#471930" />
      </linearGradient>
      <linearGradient id="floor" x1="0" y1="0" x2="0" y2="1">
        <stop offset="0.4" stopColor="#6a2747" stopOpacity="0" />
        <stop offset="0.85" stopColor="#6a2747" />
      </linearGradient>
      <linearGradient id="skirt" x1="0" y1="0" x2="1" y2="0">
        <stop offset="0" stopColor="#6a2747" stopOpacity="0" />
        <stop offset="0.3" stopColor="#6a2747" />
      </linearGradient>
      <linearGradient id="top" x1="0" y1="0" x2="1" y2="0">
        <stop offset="0" stopColor="#672749" />
        <stop offset="0.65" stopColor="#642549" />
        <stop offset="0.8" stopColor="#592144" />
        <stop offset="1" stopColor="#3f1528" />
      </linearGradient>
      <linearGradient id="corner" x1="0" y1="0" x2="0.400" y2="1">
        <stop offset="0" stopColor="#6a2748" />
        <stop offset="1" stopColor="#752b50" />
      </linearGradient>
    </defs>
    <rect x="49" y="129" width="1280" height="768" fill="#6a2748" />
    <rect x="1150" y="129" width="179" height="768" fill="url(#pink)" />
    <path d="M49 500L88 560Q95 740 202 897H49z" fill="url(#corner)" />
    <path d="M300 129H1203Q1295 275 1295 430Q1295 650 1170 765L1050 897H202Q88 740 88 560Q88 320 300 129z" fill="url(#disc)" />
    <path d="M49 129H1130Q1169 150 1169 173H268Q230 200 209 228Q150 275 120 370L49 400z" fill="url(#top)" />
    <path d="M1130 129H1203Q1225 160 1237 190Q1190 150 1130 129z" fill="#36111f" />
    <rect x="1150" y="129" width="179" height="768" fill="url(#floor)" />
    <rect x="202" y="840" width="960" height="57" fill="url(#skirt)" />
  </WallpaperArt>
)

/* ---------- small icons ---------- */

const AppIcon = () => (
  <svg width="16" height="16" viewBox="0 0 16 16" aria-hidden="true">
    <rect width="16" height="16" fill="#2d3140" />
    <path d="M3 12.500h3.500l4-7H16" stroke="#f3a02c" strokeWidth="4" fill="none" />
    <path d="M9.500 5L11 3.500h5" stroke="#ffd98a" strokeWidth="1.500" fill="none" />
    <path d="M3 6h5v3.500L6.500 11 3 8z" fill="#e6512a" />
    <path d="M1 1h6v4H1z" fill="#d5d7dc" />
    <path d="M2 2h1v2M4 2h2M4 4h2" stroke="#666" fill="none" />
  </svg>
)

const trayIcons = {
  accessibility: (
    <g fill="#f2f2f2">
      <circle cx="8" cy="3" r="2" />
      <path d="M2 6h12v1.500l-4 .5v7H8.500v-4h-1v4H6V8l-4-.5z" />
    </g>
  ),
  network: (
    <g fill="#f2f2f2">
      <rect x="5.500" y="1" width="5" height="4.500" rx="1" />
      <rect x="0.500" y="10" width="5" height="4.500" rx="1" />
      <rect x="10.500" y="10" width="5" height="4.500" rx="1" />
      <path d="M8 5v3M3 11V7.500h10V11" stroke="#f2f2f2" strokeWidth="1.200" fill="none" />
    </g>
  ),
  volume: (
    <g fill="none" stroke="#f2f2f2">
      <path d="M1 5.500h2.500L7.500 2v12l-4-3.500H1z" fill="#f2f2f2" stroke="none" />
      <path d="M9.500 5.500q2 2.500 0 5" strokeWidth="1.300" />
      <path d="M11.800 3.500q3.500 4.500 0 9" stroke="#8a8a8a" />
    </g>
  ),
  power: <path d="M8 1v7M4.500 3A6.200 6.200 0 1 0 11.500 3" stroke="#f2f2f2" strokeWidth="1.200" fill="none" />
}

const statusIcons = [
  {
    name: "Hard disks",
    art: (
      <>
        <rect x="1.500" y="1.500" width="13" height="13" rx="1" fill="#59c3f7" stroke="#2a6fb0" />
        <circle cx="8" cy="7" r="4.500" fill="#e9f7ff" />
        <path d="M5.500 6.500q0-2 2.500-2t2.500 2.500-3 1.500" stroke="#2a6fb0" fill="none" />
        <path d="M3 12h4l3 1.500" stroke="#fff" fill="none" strokeWidth="1.500" />
      </>
    )
  },
  {
    name: "Optical drives",
    art: (
      <>
        <circle cx="8" cy="8" r="7" fill="#5cc8fb" stroke="#2d86c4" />
        <path d="M3 11L8 8l-3-5zM13 5L8 8l3 5z" fill="#8ddafd" />
        <circle cx="8" cy="8" r="2.500" fill="#e8f8ff" />
        <circle cx="8" cy="8" r="1" fill="#2a6fb0" />
      </>
    )
  },
  {
    name: "Audio",
    art: (
      <>
        <path d="M9 3h6v12H9z" fill="#cfcfcf" />
        <path d="M11 5h3M11 7h3M11 9h3M11 11h3" stroke="#9b9b9b" />
        <path d="M1.500 2.500h2v11h-2zM3.500 5.500h2.500L9.500 2v12L6 10.500H3.500z" fill="#6ed0fb" stroke="#2d86c4" />
      </>
    )
  },
  {
    name: "Network",
    art: (
      <>
        <path d="M5 1h11v9H5z" fill="#777" />
        <path d="M6 2h9v7H6z" fill="#fff" />
        <path d="M7 3h7v5H7z" fill="#1d62c4" />
        <path d="M0 6h11v8H0z" fill="#555" />
        <path d="M1 7h9v6H1z" fill="#fff" />
        <path d="M2 8h7v4H2z" fill="#1d62c4" />
        <path d="M2.500 15h6" stroke="#777" />
      </>
    )
  },
  {
    name: "USB",
    art: (
      <>
        <path d="M1.500 14.500q0-4 2-6l4-4 4 4-4 4q-2 2-6 2z" fill="#66cbfa" stroke="#2d6fae" />
        <path d="M8 4l3-3 4 4-3 3z" fill="#eee" stroke="#666" />
        <path d="M10.500 3.500h1M12 5h1" stroke="#555" />
      </>
    )
  },
  {
    name: "Shared folders",
    art: <path d="M0.500 4.500h7l2-2h6v12h-15z" fill="#dcdcdc" stroke="#bdbdbd" />
  },
  {
    name: "Display",
    art: (
      <>
        <path d="M0.500 1.500h15v11h-15z" fill="#fff" stroke="#444" />
        <path d="M2 3h12v8H2z" fill="#1f66cc" />
        <path d="M5.500 5.500h5v3h-5z" fill="#1f66cc" stroke="#fff" />
        <path d="M3 14.500h10" stroke="#666" />
      </>
    )
  },
  {
    name: "Recording",
    art: (
      <>
        <path d="M0 5h12v9H0z" fill="#666" />
        <path d="M1 6h10v7H1z" fill="#fff" />
        <path d="M2 7h8v5H2z" fill="#1f66cc" />
        <path d="M5.500 1.500H15v7.500H5.500z" fill="#5b74db" stroke="#33439c" />
        <path d="M7 3h7" stroke="#9fb0f5" />
        <path d="M2 15h8" stroke="#777" />
      </>
    )
  },
  {
    name: "Processor",
    art: (
      <>
        <rect x="1.500" y="1.500" width="9" height="13" fill="#b7baf2" stroke="#3d3f9e" strokeDasharray="2 1" />
        <path d="M3.500 5l2.500 6 2.500-6" stroke="#23257d" strokeWidth="1.600" fill="none" />
        <rect x="12" y="1" width="4" height="14.500" fill="#000" />
        <path d="M13 3h2v4h-2z" fill="#ffd62e" />
        <path d="M13 7h2v7h-2z" fill="#a8e05a" />
      </>
    )
  },
  {
    name: "Mouse integration",
    art: (
      <>
        <circle cx="8" cy="8" r="7" fill="#63c5f5" stroke="#3a78a8" />
        <path d="M3 3q3-2 5-1.500L6 6 3 8z" fill="#d6f1ff" />
        <path d="M8 4l3-1 4 5-3 1 2 3-4 4-3-1 3-4z" fill="#7bd13c" stroke="#37761c" />
      </>
    )
  },
  {
    name: "Host key",
    art: (
      <>
        <rect x="0.500" y="0.500" width="15" height="15" rx="1.500" fill="#77d2f7" stroke="#3391a8" />
        <path d="M6 3h4v5h3l-5 5-5-5h3z" fill="#b9ef52" stroke="#3f8f1f" />
      </>
    )
  }
]

const menus = ["File", "Machine", "View", "Input", "Devices", "Help"]
const stepCount = 17
const currentStep = 13

const App = () => (
  <Desktop>
    <GlobalStyle />
    <Window>
      <TitleBar>
        <AppIcon />
        <WindowTitle>Ubuntu26 [Running] - Oracle VM VirtualBox</WindowTitle>
        <CaptionButtons>
          <CaptionButton aria-label="Minimize">
            <svg width="11" height="11" stroke="#111">
              <path d="M1 5.500h9" />
            </svg>
          </CaptionButton>
          <CaptionButton aria-label="Maximize">
            <svg width="11" height="11" stroke="#111" fill="none">
              <rect x="0.500" y="0.500" width="9" height="9" rx="1" />
            </svg>
          </CaptionButton>
          <CaptionButton aria-label="Close window">
            <svg width="11" height="11" stroke="#111">
              <path d="M0.500 0.500l10 10M10.500 0.500l-10 10" />
            </svg>
          </CaptionButton>
        </CaptionButtons>
      </TitleBar>
      <MenuBar>
        {menus.map(item => (
          <MenuLink key={item} href="#">
            {item}
          </MenuLink>
        ))}
      </MenuBar>
      <Viewport>
        <Guest>
          <TopBar>
            <Workspaces>
              <Workspace $current />
              <Workspace />
            </Workspaces>
            <Clock>{"Jul 21  16:08"}</Clock>
            <Tray>
              {Object.keys(trayIcons).map(name => (
                <TrayIcon key={name} viewBox="0 0 16 16" role="img" aria-label={name}>
                  {trayIcons[name]}
                </TrayIcon>
              ))}
            </Tray>
          </TopBar>
          <Stage>
            <Wallpaper />
            <Dialog>
              <DialogHeader>
                <DialogTitle>Select your timezone</DialogTitle>
                <CloseButton aria-label="Close">
                  <svg width="10" height="10" stroke="#333" strokeWidth="1.300">
                    <path d="M1 1l8 8M9 1l-8 8" />
                  </svg>
                </CloseButton>
              </DialogHeader>
              <Fields>
                <Field>
                  <FieldInput id="location" defaultValue="Mumbai (Maharashtra, India)" />
                  <FieldLabel htmlFor="location">Location</FieldLabel>
                </Field>
                <Field>
                  <FieldInput id="timezone" defaultValue="Asia/Kolkata" />
                  <FieldLabel htmlFor="timezone">Timezone</FieldLabel>
                </Field>
                <Highlight $inset="-5px 14px 1px 9px" />
              </Fields>
              <WorldMap />
              <DialogFooter>
                <ButtonSlot>
                  <WizardButton>Back</WizardButton>
                </ButtonSlot>
                <Steps>
                  {Array.from({ length: stepCount }, (_, i) => (
                    <Step key={i} $current={i === currentStep} />
                  ))}
                </Steps>
                <ButtonSlot>
                  <WizardButton $filled>Next</WizardButton>
                  <Highlight $inset="-7px -19px -14px -18px" />
                </ButtonSlot>
              </DialogFooter>
            </Dialog>
          </Stage>
        </Guest>
      </Viewport>
      <StatusBar>
        {statusIcons.map(icon => (
          <StatusIcon key={icon.name} viewBox="0 0 16 16" role="img" aria-label={icon.name}>
            {icon.art}
          </StatusIcon>
        ))}
        <span>Right Ctrl</span>
        <Grip viewBox="0 0 12 12" fill="#b5b5b5" aria-hidden="true">
          <path d="M9 1h2v2H9zM5 5h2v2H5zM9 5h2v2H9zM1 9h2v2H1zM5 9h2v2H5zM9 9h2v2H9z" />
        </Grip>
      </StatusBar>
    </Window>
  </Desktop>
)

export default App
